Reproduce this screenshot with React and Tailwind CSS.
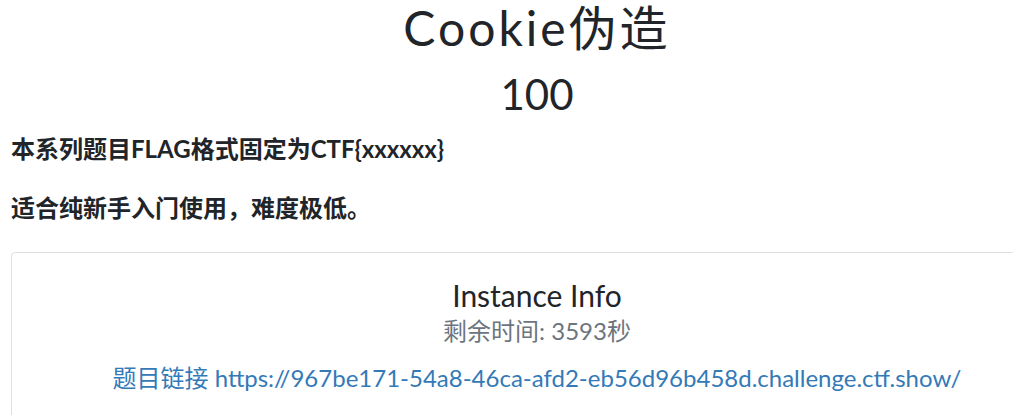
import React from "react";

const FONT = { fontFamily: 'Lato, "Noto Sans CJK SC", sans-serif' };

const App = () => {
  return (
    <div className="w-[1013px] h-[415px] overflow-hidden bg-white text-[#212529]" style={FONT}>
      <div className="w-[1074px] px-[11px]">
        {/* challenge header */}
        <div className="text-center">
          <h2 className="text-[48px] leading-[56px] tracking-[3px]">Cookie伪造</h2>
          <h3 className="mt-[13px] text-[42px] leading-[50px]">100</h3>
        </div>

        {/* description */}
        <div className="text-[24px] font-bold leading-[36px]">
          <p className="mt-[12px]">本系列题目FLAG格式固定为CTF{"{xxxxxx}"}</p>
          <p className="mt-[23px]">适合纯新手入门使用，难度极低。</p>
        </div>

        {/* instance card */}
        <div className="mt-[26px] border border-[#dfdfdf] rounded-[4px] pt-[22px] pb-[24px] text-center">
          <h4 className="text-[30px] leading-[40px]">Instance Info</h4>
          <p className="text-[24px] leading-[32px] text-[#6c757d]">剩余时间: 3593秒</p>
          <p className="mt-[15px] text-[24px] leading-[32px]">
            <a className="text-[#337ab7]" href="#">
              题目链接 https://967be171-54a8-46ca-afd2-eb56d96b458d.challenge.ctf.show/
            </a>
          </p>
        </div>
      </div>
    </div>
  );
};

export default App;
